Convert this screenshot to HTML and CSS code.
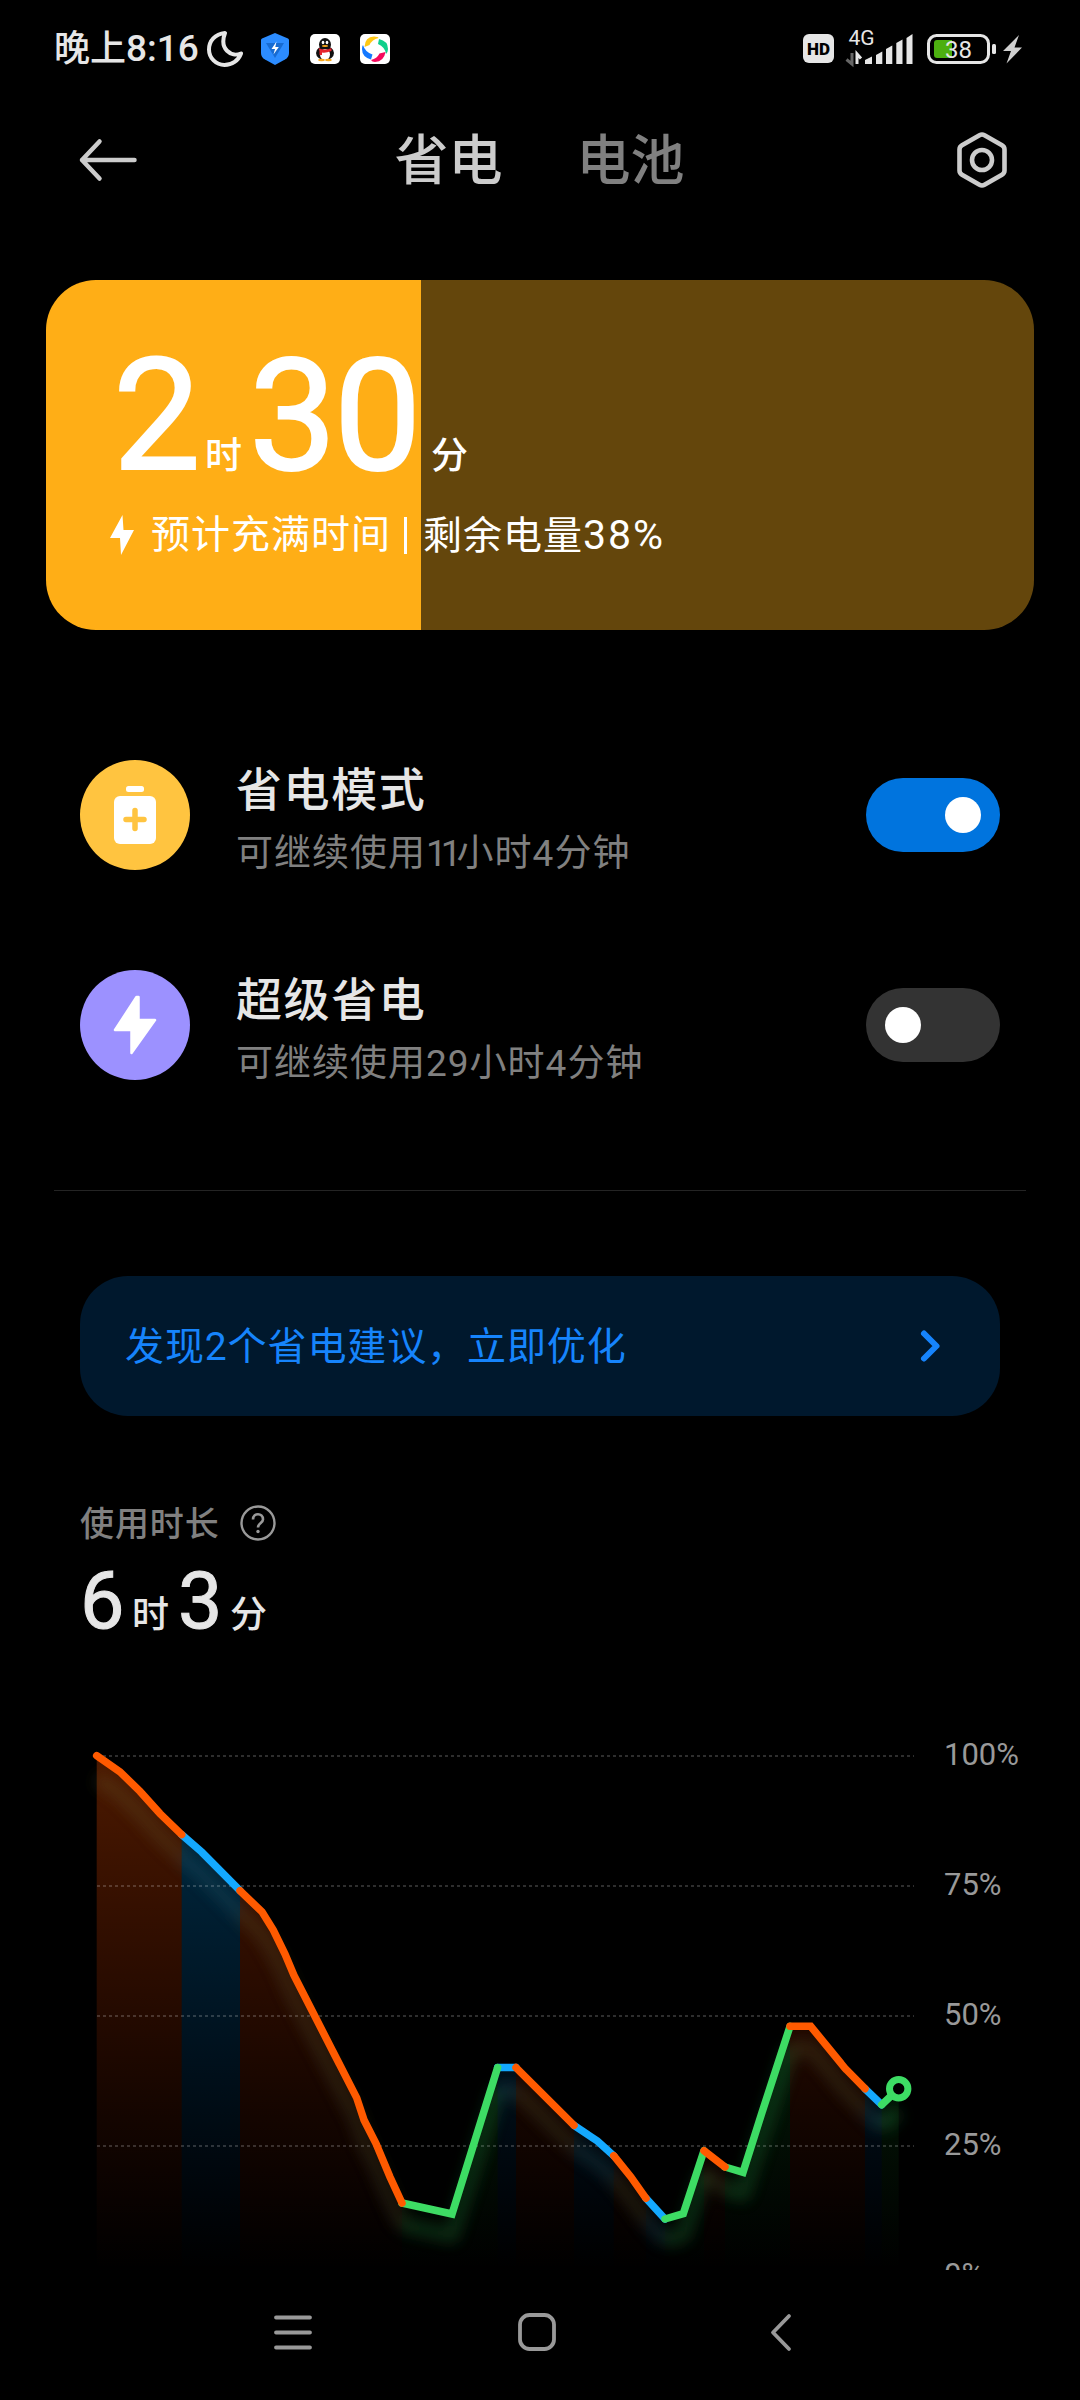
FILE: index.html
```html
<!DOCTYPE html>
<html lang="zh-CN">
<head>
    <meta charset="UTF-8">
    <title>省电与电池</title>
    <link rel="stylesheet" href="styles.css">
</head>
<body>
    <div class="status-bar">
        <span class="time">晚上<span class="clock">8:16</span></span>
        <svg class="moon" width="36" height="36" viewBox="0 0 36 36">
            <path d="M18 2 C8 3 2 10 2 18.500 C2 27 9 34 17.500 34 C25 34 31.500 29.500 34 22.500 C24 26.500 12 18 18 2 Z" fill="none" stroke="#e6e6e6" stroke-width="4" stroke-linejoin="round"/>
        </svg>
        <svg class="shield" width="28" height="32" viewBox="0 0 28 32">
            <path d="M14 0 L27 5.500 Q28 6 28 7 V20 Q28 24 24 26.500 L14 32 L4 26.500 Q0 24 0 20 V7 Q0 6 1 5.500 Z" fill="#2c8cff"/>
            <path d="M5 10 H23 L14 25 Z" fill="#176bd2"/>
            <path d="M15.500 8.500 L10.500 16 H14 L12.500 21.500 L17.800 14 H14.300 Z" fill="#fff"/>
        </svg>
        <svg class="app" width="30" height="30" viewBox="0 0 30 30">
            <rect width="30" height="30" rx="5" fill="#fff"/>
            <ellipse cx="15" cy="19" rx="9" ry="7" fill="#111"/>
            <ellipse cx="15" cy="10.500" rx="6" ry="6.500" fill="#111"/>
            <ellipse cx="15" cy="20.500" rx="5" ry="5.500" fill="#fff"/>
            <path d="M8.500 14 Q15 17 21.500 14 V17 Q15 19.500 12 18.500 V21 H9.500 V17 Z" fill="#e5242c"/>
            <ellipse cx="13" cy="8.500" rx="1.300" ry="1.800" fill="#fff"/>
            <ellipse cx="17" cy="8.500" rx="1.300" ry="1.800" fill="#fff"/>
            <ellipse cx="15" cy="12" rx="3.200" ry="1" fill="#f8a81c"/>
            <ellipse cx="11.500" cy="26" rx="3.300" ry="1.200" fill="#f8a81c"/>
            <ellipse cx="18.500" cy="26" rx="3.300" ry="1.200" fill="#f8a81c"/>
        </svg>
        <svg class="app" width="30" height="30" viewBox="0 0 30 30">
            <rect width="30" height="30" rx="5" fill="#fff"/>
            <path d="M4.500 13 Q5 2.500 14 2.500 Q18 2.500 18.500 4 Q12 5.500 9.500 11 Z" fill="#ffc914"/>
            <path d="M19 5 Q28 7 28 15 Q28 18 26 20 Q25 13 18 10 Z" fill="#10cf8c"/>
            <path d="M25.500 18 Q24 27.500 15 28 Q12 28 11 26 Q17 24.500 19.500 19.500 Z" fill="#f5085c"/>
            <path d="M3 11 Q5 18 12.500 20.500 L11 25.500 Q2 23 2 15 Q2 12 3 11 Z" fill="#1478ff"/>
        </svg>
        <svg class="signals" width="224" height="98" viewBox="802 0 224 98">
            <rect x="803" y="34" width="31" height="29" rx="6" fill="#e6e6e6"/>
            <text x="818.500" y="54.500" class="hd">HD</text>
            <text x="848.500" y="45" class="net">4G</text>
            <path d="M852 53 V64 L846.500 59.500" class="arrow-down"/>
            <path d="M857 64 V54 L861 58.500" class="arrow-up"/>
            <g fill="#e6e6e6">
                <path d="M865 64 V60 L872 56.500 V64 Z"/>
                <path d="M876 64 V55 L882.300 51.500 V64 Z"/>
                <path d="M886 64 V49 L892.300 45.500 V64 Z"/>
                <path d="M896.300 64 V43 L902.500 39.500 V64 Z"/>
                <path d="M906.500 64 V38 L912.500 34 V64 Z"/>
                <rect x="992" y="44" width="4" height="10" rx="1.500"/>
                <path d="M1019 35 L1003 51 H1011 L1006.500 63.500 L1022 47.500 H1014.500 Z" fill="#d0d0d0"/>
            </g>
            <rect x="928.500" y="35.500" width="60" height="27" rx="8" fill="none" stroke="#e6e6e6" stroke-width="3"/>
            <path d="M937 40 H952 V58 H937 Q934 58 934 55 V43 Q934 40 937 40 Z" fill="#4caf10"/>
            <text x="958.500" y="57.500" class="level">38</text>
        </svg>
    </div>

    <div class="header">
        <svg width="60" height="44" viewBox="0 0 60 44">
            <path d="M21.500 3.500 L4 22 L21.500 40.500 M4 22 H56.500" fill="none" stroke="#ccc" stroke-width="4.500" stroke-linecap="round" stroke-linejoin="round"/>
        </svg>
        <div class="tabs">
            <span class="tab active">省电</span>
            <span class="tab">电池</span>
        </div>
        <svg width="54" height="58" viewBox="0 0 54 58">
            <path d="M24.500 4.200 Q27 2.800 29.500 4.200 L47 14.300 Q49.500 15.700 49.500 18.500 V39.500 Q49.500 42.300 47 43.700 L29.500 53.800 Q27 55.200 24.500 53.800 L7 43.700 Q4.500 42.300 4.500 39.500 V18.500 Q4.500 15.700 7 14.300 Z" fill="none" stroke="#ccc" stroke-width="4.600"/>
            <circle cx="27" cy="29" r="10" fill="none" stroke="#ccc" stroke-width="4.600"/>
        </svg>
    </div>

    <div class="battery-card">
        <div class="remaining">
            <span class="big">2</span><span class="unit">时</span><span class="big second">30</span><span class="unit">分</span>
        </div>
        <div class="info">
            <svg width="24" height="40" viewBox="0 0 24 40">
                <path d="M12.500 0 L0 23 H10 L11 40 L24 15 H13.500 Z" fill="#fff"/>
            </svg>
            <span>预计充满时间</span>
            <span class="bar"></span>
            <span>剩余电量<span class="percent">38%</span></span>
        </div>
    </div>

    <div class="modes">
        <div class="mode">
            <div class="mode-icon yellow">
                <svg width="42" height="58" viewBox="0 0 42 58">
                    <rect x="12" y="0" width="18" height="6" rx="2.500" fill="#fff"/>
                    <rect x="0" y="10" width="42" height="48" rx="6" fill="#fff"/>
                    <path d="M21 24.500 V42.500 M12 33.500 H30" stroke="#ffc440" stroke-width="5.500" stroke-linecap="round"/>
                </svg>
            </div>
            <div class="mode-text">
                <div class="mode-title">省电模式</div>
                <div class="mode-desc">可继续使用<span class="narrow">11</span>小时4分钟</div>
            </div>
            <div class="toggle on"><span class="knob"></span></div>
        </div>
        <div class="mode">
            <div class="mode-icon purple">
                <svg width="44" height="60" viewBox="0 0 44 60">
                    <path d="M23.500 2 L2 35 H18.500 V58 L42 25 H25.500 V2 Z" fill="#fff" stroke="#fff" stroke-width="2.500" stroke-linejoin="round"/>
                </svg>
            </div>
            <div class="mode-text">
                <div class="mode-title">超级省电</div>
                <div class="mode-desc">可继续使用29小时4分钟</div>
            </div>
            <div class="toggle"><span class="knob"></span></div>
        </div>
    </div>

    <div class="suggestion">
        <span>发现2个省电建议，立即优化</span>
        <svg width="22" height="34" viewBox="0 0 22 34">
            <path d="M5 4.500 L17.500 17 L5 29.500" fill="none" stroke="#1684fc" stroke-width="6" stroke-linecap="round" stroke-linejoin="round"/>
        </svg>
    </div>

    <div class="usage">
        <div class="usage-label">
            <span>使用时长</span>
            <svg width="36" height="36" viewBox="0 0 36 36">
                <circle cx="18" cy="18" r="16.500" fill="none" stroke="#999" stroke-width="2.400"/>
                <path d="M13 14.500 C13 7.500 23 7.500 23 14.500 C23 18 18 18 18 22.500" fill="none" stroke="#999" stroke-width="2.600"/>
                <circle cx="18" cy="26.500" r="1.700" fill="#999"/>
            </svg>
        </div>
        <div class="usage-time">
            <span class="num">6</span><span class="unit">时</span><span class="num">3</span><span class="unit">分</span>
        </div>
    </div>

    <div class="chart">
        <svg id="batteryChart" width="860" height="550" viewBox="60 1720 860 550">
            <defs>
                <linearGradient id="orange" gradientUnits="userSpaceOnUse" x1="0" y1="1756" x2="0" y2="2270">
                    <stop offset="0" stop-color="#ff5500" stop-opacity="0.300"/>
                    <stop offset="0.700" stop-color="#ff4000" stop-opacity="0.080"/>
                    <stop offset="1" stop-color="#ff3000" stop-opacity="0"/>
                </linearGradient>
                <linearGradient id="blue" gradientUnits="userSpaceOnUse" x1="0" y1="1756" x2="0" y2="2270">
                    <stop offset="0" stop-color="#00a8ff" stop-opacity="0.280"/>
                    <stop offset="0.700" stop-color="#0090ff" stop-opacity="0.080"/>
                    <stop offset="1" stop-color="#0070ff" stop-opacity="0"/>
                </linearGradient>
                <linearGradient id="green" gradientUnits="userSpaceOnUse" x1="0" y1="1756" x2="0" y2="2270">
                    <stop offset="0" stop-color="#20e040" stop-opacity="0.240"/>
                    <stop offset="1" stop-color="#20e040" stop-opacity="0"/>
                </linearGradient>
                <filter id="glow" filterUnits="userSpaceOnUse" x="60" y="1720" width="860" height="560">
                    <feGaussianBlur stdDeviation="7"/>
                </filter>
            </defs>
            <g id="areas"></g>
            <g id="shadows" filter="url(#glow)"></g>
            <g id="grid"></g>
            <g id="lines"></g>
            <circle cx="898.700" cy="2088.700" r="9.200" fill="#000" stroke="#3ddc64" stroke-width="7"/>
        </svg>
        <div class="axis">
            <span>100%</span>
            <span>75%</span>
            <span>50%</span>
            <span>25%</span>
            <span>0%</span>
        </div>
    </div>

    <div class="nav-bar">
        <svg width="40" height="40" viewBox="0 0 40 40">
            <path d="M3 5.500 H37 M3 20.500 H37 M3 35.500 H37" stroke="#999" stroke-width="3.800" stroke-linecap="round"/>
        </svg>
        <svg width="40" height="40" viewBox="0 0 40 40">
            <rect x="3" y="3" width="34" height="34" rx="9.500" fill="none" stroke="#999" stroke-width="3.800"/>
        </svg>
        <svg width="40" height="40" viewBox="0 0 40 40">
            <path d="M28 4 L12 20.500 L28 37" fill="none" stroke="#999" stroke-width="3.800" stroke-linecap="round" stroke-linejoin="round"/>
        </svg>
    </div>

    <script>
        const colors = { orange: '#ff5a00', blue: '#14a9ff', green: '#3ddc64' };
        const shadowColors = { orange: '#7a8a48', blue: '#4090a0', green: '#3ddc64' };

        // Tramos de la curva, cada uno con su color
        const segments = [
            ['orange', [[96.7, 1755.7], [120, 1771.8], [140, 1791.4], [160, 1813.6], [181.7, 1834.6]]],
            ['blue', [[181.7, 1834.6], [201.7, 1852], [240, 1890.7]]],
            ['orange', [[240, 1890.7], [262, 1911.8], [273.3, 1930], [285, 1954], [294, 1975.4], [356.7, 2097.9], [364, 2120], [376, 2143.6], [390, 2177], [402, 2203]]],
            ['green', [[402, 2203], [452, 2214], [497.6, 2067.6]]],
            ['blue', [[497.6, 2067.6], [516, 2067.6]]],
            ['orange', [[516, 2067.6], [574, 2125.3]]],
            ['blue', [[574, 2125.3], [597.3, 2141], [613.7, 2155.7]]],
            ['orange', [[613.7, 2155.7], [630.7, 2176.7], [646, 2198.3]]],
            ['blue', [[646, 2198.3], [665, 2219]]],
            ['green', [[665, 2219], [683.3, 2213.7], [704, 2150.7]]],
            ['orange', [[704, 2150.7], [725, 2167]]],
            ['green', [[725, 2167], [743, 2172.3], [761.7, 2113.3], [790, 2026.3]]],
            ['orange', [[790, 2026.3], [810.7, 2026.3], [845, 2068.3], [865, 2088.7]]],
            ['blue', [[865, 2088.7], [881.7, 2104.7]]],
            ['green', [[881.7, 2104.7], [898.7, 2088.7]]]
        ];

        let areas = '';
        let shadows = '';
        let blueLines = '';
        let greenLines = '';
        let orangeLines = '';

        segments.forEach(([color, points]) => {
            const first = points[0];
            const last = points[points.length - 1];
            const list = points.map(p => p.join(',')).join(' ');
            const moved = points.map(p => p[0] + ',' + (p[1] + 22)).join(' ');

            areas += `<polygon points="${first[0]},2270 ${list} ${last[0]},2270" fill="url(#${color})"/>`;
            shadows += `<polyline points="${moved}" stroke="${shadowColors[color]}"/>`;

            const line = `<polyline points="${list}" stroke="${colors[color]}"/>`;
            if (color === 'blue') blueLines += line;
            else if (color === 'green') greenLines += line;
            else orangeLines += line;
        });

        let grid = '';
        [1756, 1886, 2016, 2146].forEach(y => {
            grid += `<line x1="97" x2="914" y1="${y}" y2="${y}"/>`;
        });

        document.getElementById('areas').innerHTML = areas;
        document.getElementById('shadows').innerHTML = shadows;
        document.getElementById('grid').innerHTML = grid;
        document.getElementById('lines').innerHTML = blueLines + greenLines + orangeLines;
    </script>
</body>
</html>
```
FILE: styles.css
```css
* {
    box-sizing: border-box;
}

body {
    margin: 0;
    width: 1080px;
    height: 2400px;
    overflow: hidden;
    background-color: #000;
    color: #e6e6e6;
    font-family: Roboto, "Noto Sans CJK SC", sans-serif;
}

svg {
    display: block;
    flex-shrink: 0;
}

/* Barra de estado */
.status-bar {
    display: flex;
    align-items: center;
    height: 98px;
    padding: 0 54px;
}

.time {
    width: 153px;
    font-size: 36px;
    font-weight: 500;
    line-height: 98px;
    white-space: nowrap;
}

.clock {
    font-size: 37px;
}

.shield {
    margin-left: 18px;
}

.app {
    margin-left: 21px;
}

.app + .app {
    margin-left: 20px;
}

.signals {
    margin-left: auto;
}

.hd {
    font-size: 17px;
    font-weight: 900;
    text-anchor: middle;
    fill: #000;
}

.net {
    font-size: 21px;
    fill: #e6e6e6;
}

.level {
    font-size: 24px;
    text-anchor: middle;
    fill: #e6e6e6;
}

.arrow-down, .arrow-up {
    fill: none;
    stroke: #666;
    stroke-width: 3;
}

.arrow-up {
    stroke: #e6e6e6;
}

/* Encabezado */
.header {
    display: flex;
    justify-content: space-between;
    align-items: center;
    height: 124px;
    padding: 0 71px 0 78px;
}

.tabs {
    display: flex;
    gap: 74px;
    padding: 3px 14px 0 0;
}

.tab {
    font-size: 54px;
    font-weight: 500;
    line-height: 80px;
    color: #808080;
}

.tab.active {
    color: #ccc;
}

/* Tarjeta de carga */
.battery-card {
    height: 350px;
    margin: 58px 46px 0;
    padding: 56px 64px 0;
    border-radius: 50px;
    background: linear-gradient(to right, #ffae16 38%, #64460c 38%);
    color: #fff;
}

.remaining {
    display: flex;
    align-items: baseline;
    height: 160px;
    padding-left: 3px;
    line-height: 160px;
}

.big {
    width: 92px;
    font-size: 156px;
    font-weight: 400;
    letter-spacing: -3px;
    -webkit-text-stroke: 2px #fff;
}

.big.second {
    width: 182px;
    margin-left: 5px;
}

.unit {
    width: 39px;
    font-size: 37px;
    font-weight: 500;
}

.info {
    display: flex;
    align-items: center;
    height: 78px;
    font-size: 39px;
    line-height: 54px;
    letter-spacing: 1px;
    white-space: nowrap;
}

.info svg {
    margin-right: 17px;
}

.info .bar {
    width: 3px;
    height: 37px;
    margin: 0 16px 0 13px;
    background-color: #fff;
}

.percent {
    font-size: 41px;
    letter-spacing: 2px;
}

/* Modos de ahorro */
.modes {
    display: flex;
    flex-direction: column;
    gap: 100px;
    height: 561px;
    margin: 0 54px;
    padding: 130px 26px 0;
    border-bottom: 1px solid #242424;
}

.mode {
    display: flex;
    align-items: center;
    height: 110px;
}

.mode-icon {
    display: flex;
    align-items: center;
    justify-content: center;
    width: 110px;
    height: 110px;
    border-radius: 50%;
}

.yellow {
    background-color: #ffc440;
}

.purple {
    background-color: #9c91ff;
}

.mode-text {
    flex: 1;
    margin: 14px 0 0 46px;
}

.mode-title {
    font-size: 46px;
    font-weight: 500;
    line-height: 64px;
    letter-spacing: 1.6px;
}

.mode-desc {
    font-size: 37px;
    line-height: 64px;
    letter-spacing: 1px;
    color: #808080;
}

.narrow {
    letter-spacing: -6px;
    margin-right: 1px;
}

.toggle {
    display: flex;
    align-items: center;
    width: 134px;
    height: 74px;
    padding: 0 19px;
    border-radius: 37px;
    background-color: #333;
}

.toggle.on {
    justify-content: flex-end;
    background-color: #0074de;
}

.knob {
    width: 36px;
    height: 36px;
    border-radius: 50%;
    background-color: #fff;
}

/* Sugerencias */
.suggestion {
    display: flex;
    justify-content: space-between;
    align-items: center;
    height: 140px;
    margin: 85px 80px 0;
    padding: 0 59px 0 45px;
    border-radius: 48px;
    background-color: #00182d;
    color: #1684fc;
    font-size: 39px;
    letter-spacing: 0.9px;
}

.suggestion span {
    padding-bottom: 6px;
}

/* Tiempo de uso */
.usage {
    height: 304px;
    padding: 82px 80px 0;
}

.usage-label {
    display: flex;
    align-items: center;
    gap: 20px;
    height: 50px;
    color: #808080;
    font-size: 34px;
    font-weight: 500;
    letter-spacing: 0.9px;
}

.usage-label span {
    padding-bottom: 4px;
}

.usage-time {
    display: flex;
    align-items: baseline;
    height: 100px;
    padding-top: 3px;
    line-height: 100px;
}

.num {
    width: 52px;
    font-size: 79px;
    font-weight: 400;
    -webkit-text-stroke: 1px #e6e6e6;
}

.usage-time .unit {
    width: 46px;
}

/* Gráfica de batería */
.chart {
    display: flex;
    height: 550px;
    padding-left: 60px;
    overflow: hidden;
}

.axis {
    display: flex;
    flex-direction: column;
    margin: -30px 0 0 24px;
    color: #999;
    font-size: 31px;
    line-height: 130px;
}

#shadows polyline {
    fill: none;
    stroke-width: 15px;
    stroke-linejoin: round;
    opacity: 0.17;
}

#grid line {
    stroke: rgba(255, 255, 255, 0.18);
    stroke-width: 2px;
    stroke-dasharray: 3 3;
}

#lines polyline {
    fill: none;
    stroke-width: 7.5px;
    stroke-linecap: round;
    stroke-linejoin: miter;
}

/* Barra de navegación */
.nav-bar {
    display: flex;
    justify-content: center;
    align-items: center;
    gap: 204px;
    height: 124px;
    padding-right: 7px;
}
```
